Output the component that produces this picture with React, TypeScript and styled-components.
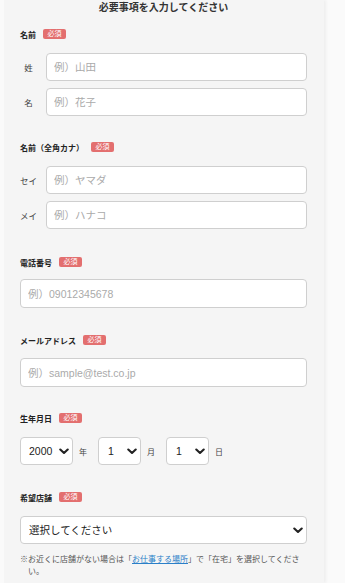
import styled, { createGlobalStyle } from "styled-components";

const GlobalStyle = createGlobalStyle`
  html, body {
    margin: 0;
    padding: 0;
    background: #fafafa;
    font-family: "Liberation Sans", "Noto Sans CJK JP", sans-serif;
    color: #333;
  }
`

const Card = styled.main`
  width: 320px;
  margin-left: 4px;
  min-height: 583px;
  box-sizing: border-box;
  padding: 0 17px 0 16px;
  background: #f5f5f5;
  box-shadow: 2px 0 3px rgba(0, 0, 0, 0.05);
`

const Title = styled.h1`
  margin: 0;
  font-size: 10px;
  line-height: 16px;
  font-weight: 700;
  text-align: center;
  color: #333;
`

const Section = styled.section<{ $top: number }>`
  margin-top: ${props => props.$top}px;
`

const LabelRow = styled.div`
  display: flex;
  align-items: center;
  gap: 7px;
  height: 12px;
`

const Label = styled.span`
  font-size: 8px;
  font-weight: 700;
  color: #222;
`

const Badge = styled.span`
  display: inline-block;
  height: 10px;
  line-height: 10px;
  padding: 0 4.5px;
  border-radius: 2px;
  background: #e36f6f;
  color: #fff;
  font-size: 7px;
`

const Fields = styled.div<{ $gap?: number }>`
  margin-top: ${props => props.$gap ?? 13}px;
  display: flex;
  flex-direction: column;
  gap: 7px;
`

const PairRow = styled.div`
  display: flex;
  align-items: center;
  gap: 9px;
`

const RowLabel = styled.span`
  flex-shrink: 0;
  width: 17px;
  text-align: center;
  font-size: 8.5px;
  color: #444;
  white-space: nowrap;
`

const TextInput = styled.input<{ $h?: number }>`
  display: block;
  width: 100%;
  min-width: 0;
  height: ${props => props.$h ?? 28}px;
  box-sizing: border-box;
  padding: 0 7px;
  border: 1px solid #cfcfcf;
  border-radius: 4px;
  background: #fff;
  font-family: inherit;
  font-size: 10.5px;
  color: #333;
  outline: none;

  &::placeholder {
    color: #aaa;
  }
`

const DateRow = styled.div`
  margin-top: 13px;
  display: flex;
  align-items: center;
`

const SelectBox = styled.div<{ $w?: number }>`
  position: relative;
  flex-shrink: 0;
  width: ${props => (props.$w ? `${props.$w}px` : "100%")};
  height: 28px;
`

const Select = styled.select<{ $pad?: number }>`
  appearance: none;
  -webkit-appearance: none;
  width: 100%;
  height: 100%;
  box-sizing: border-box;
  padding: 0 18px 0 ${props => props.$pad ?? 8}px;
  border: 1px solid #cfcfcf;
  border-radius: 4px;
  background: #fff;
  font-family: inherit;
  font-size: 10.5px;
  color: #222;
  outline: none;
`

const Chevron = styled.svg`
  position: absolute;
  right: 4px;
  top: 50%;
  width: 10px;
  height: 7px;
  margin-top: -3px;
  pointer-events: none;
`

const Unit = styled.span`
  font-size: 8px;
  color: #444;
  margin: 0 11px 0 6px;
`

const Note = styled.div`
  margin-top: 10px;
  display: flex;
  font-size: 8px;
  line-height: 12px;
  color: #555;
`

const NoteMark = styled.span`
  flex-shrink: 0;
  width: 8px;
`

const NoteText = styled.p`
  margin: 0;
  margin-right: -8px;
`

const NoteLink = styled.a`
  color: #2a7fc8;
  text-decoration: underline;
`

function Arrow() {
  return (
    <Chevron viewBox="0 0 10 7">
      <path d="M1.3 1.5 L5 5 L8.7 1.5" fill="none" stroke="#222" strokeWidth="2.1" strokeLinecap="round" strokeLinejoin="round" />
    </Chevron>
  )
}

function Required({ children }: { children: string }) {
  return (
    <LabelRow>
      <Label>{children}</Label>
      <Badge>必須</Badge>
    </LabelRow>
  )
}

export default function App() {
  return (
    <>
      <GlobalStyle />
      <Card>
        <Title>必要事項を入力してください</Title>

        <Section $top={12}>
          <Required>名前</Required>
          <Fields>
            <PairRow>
              <RowLabel>姓</RowLabel>
              <TextInput placeholder="例）山田" />
            </PairRow>
            <PairRow>
              <RowLabel>名</RowLabel>
              <TextInput placeholder="例）花子" />
            </PairRow>
          </Fields>
        </Section>

        <Section $top={25}>
          <Required>名前（全角カナ）</Required>
          <Fields>
            <PairRow>
              <RowLabel>セイ</RowLabel>
              <TextInput placeholder="例）ヤマダ" />
            </PairRow>
            <PairRow>
              <RowLabel>メイ</RowLabel>
              <TextInput placeholder="例）ハナコ" />
            </PairRow>
          </Fields>
        </Section>

        <Section $top={27}>
          <Required>電話番号</Required>
          <Fields $gap={11}>
            <TextInput $h={29} placeholder="例）09012345678" />
          </Fields>
        </Section>

        <Section $top={26}>
          <Required>メールアドレス</Required>
          <Fields $gap={12}>
            <TextInput $h={29} placeholder="例）sample@test.co.jp" />
          </Fields>
        </Section>

        <Section $top={25}>
          <Required>生年月日</Required>
          <DateRow>
            <SelectBox $w={53}>
              <Select defaultValue="2000">
                <option>2000</option>
              </Select>
              <Arrow />
            </SelectBox>
            <Unit>年</Unit>
            <SelectBox $w={43}>
              <Select $pad={9} defaultValue="1">
                <option>1</option>
              </Select>
              <Arrow />
            </SelectBox>
            <Unit>月</Unit>
            <SelectBox $w={43}>
              <Select $pad={9} defaultValue="1">
                <option>1</option>
              </Select>
              <Arrow />
            </SelectBox>
            <Unit>日</Unit>
          </DateRow>
        </Section>

        <Section $top={26}>
          <Required>希望店舗</Required>
          <Fields>
            <SelectBox>
              <Select defaultValue="">
                <option value="">選択してください</option>
              </Select>
              <Arrow />
            </SelectBox>
          </Fields>
          <Note>
            <NoteMark>※</NoteMark>
            <NoteText>
              お近くに店舗がない場合は「<NoteLink href="#">お仕事する場所</NoteLink>」で「在宅」を選択してください。
            </NoteText>
          </Note>
        </Section>
      </Card>
    </>
  )
}
